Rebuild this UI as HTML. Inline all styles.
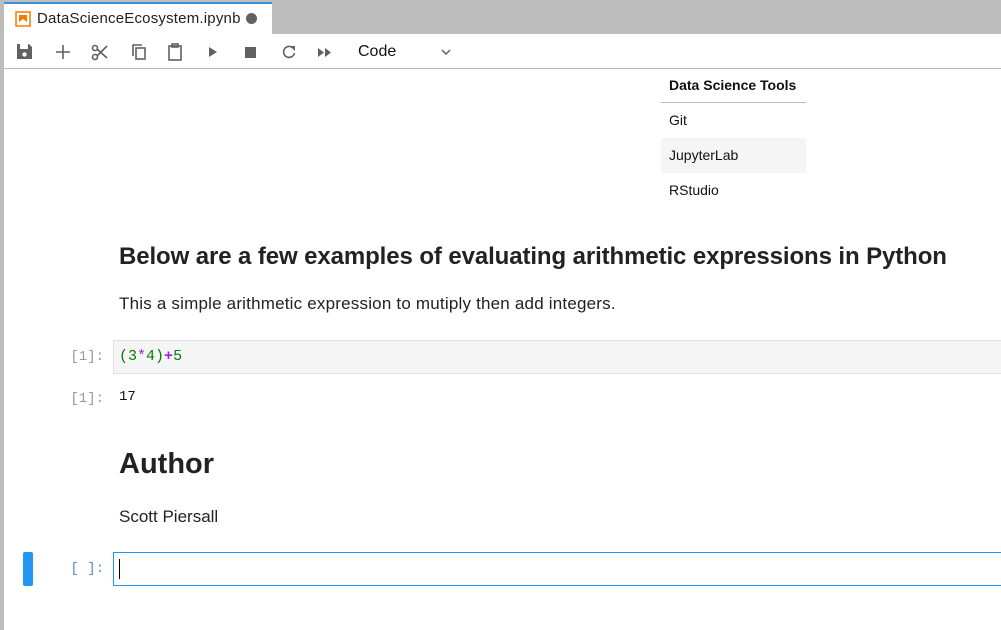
<!DOCTYPE html>
<html><head><style>
body{margin:0;width:1001px;height:630px;overflow:hidden;background:#fff;font-family:"Liberation Sans",sans-serif;position:relative}
.a{position:absolute}
.mono{font-family:"Liberation Mono",monospace;font-size:14px}
.pr{color:#999;width:100px;text-align:right;left:4px}
</style></head><body>
<div class="a" style="left:0;top:0;width:1001px;height:34px;background:#bdbdbd"></div>
<div class="a" style="left:0;top:0;width:4px;height:630px;background:#bdbdbd"></div>
<div class="a" style="left:4px;top:2px;width:268px;height:32px;background:#fff;border-top:2px solid #3c8fdf;box-sizing:border-box"></div>
<svg class="a" style="left:15px;top:11px" width="16" height="16"><rect x="1" y="1" width="14" height="14" fill="none" stroke="#f57c00" stroke-width="1.5"/><path d="M4 4h8v7l-4-3-4 3z" fill="#f57c00"/></svg>
<div class="a" style="left:37px;top:10px;font-size:15px;letter-spacing:0.2px;color:#222">DataScienceEcosystem.ipynb</div>
<div class="a" style="left:246px;top:13px;width:11px;height:11px;border-radius:50%;background:#616161"></div>
<div class="a" style="left:4px;top:68px;width:997px;height:1px;background:#bdbdbd"></div>
<svg class="a" style="left:14px;top:40px" width="450" height="24" fill="#616161" stroke="#616161">
<path d="M3 4h12l3 3v12H3z M6 4v5h8V4" stroke="none"/><rect x="6" y="5" width="7" height="4" fill="#fff" stroke="none"/><circle cx="10.5" cy="14.5" r="2.2" fill="#fff" stroke="none"/>
<path d="M49 5v14M42 12h14" stroke-width="1.6" fill="none"/>
<g fill="none" stroke-width="1.6"><circle cx="81" cy="8" r="2.5"/><circle cx="81" cy="17" r="2.5"/><path d="M83 9l10 9M83 16l10-10"/></g>
<g fill="none" stroke-width="1.6"><rect x="122" y="8" width="9" height="11"/><path d="M119 16V5h9"/></g>
<g fill="none" stroke-width="1.6"><rect x="155" y="6" width="12" height="14"/><rect x="158" y="4" width="6" height="3"/></g>
<path d="M195 7v10l8-5z" stroke="none"/>
<rect x="231" y="7" width="11" height="11" stroke="none"/>
<path d="M279 8a5.5 5.5 0 1 0 1.5 5" fill="none" stroke-width="1.6"/><path d="M276 6h5v5z" stroke="none"/>
<path d="M304 8v9l6-4.5zM311 8v9l6-4.5z" stroke="none"/>
<path d="M428 10l4 4 4-4" fill="none" stroke-width="1.5"/>
</svg>
<div class="a" style="left:358px;top:43px;font-size:16px;color:#111">Code</div>
<div class="a" style="left:661px;top:70px;width:145px;font-size:14px;color:#111">
<div style="height:32px;line-height:30px;font-weight:bold;padding-left:8px;border-bottom:1px solid #bdbdbd">Data Science Tools</div>
<div style="height:35px;line-height:35px;padding-left:8px">Git</div>
<div style="height:35px;line-height:35px;padding-left:8px;background:#f5f5f5">JupyterLab</div>
<div style="height:35px;line-height:35px;padding-left:8px">RStudio</div>
</div>
<div class="a" style="left:119px;top:243px;font-size:24px;font-weight:bold;color:#222;letter-spacing:-0.1px">Below are a few examples of evaluating arithmetic expressions in Python</div>
<div class="a" style="left:119px;top:294px;font-size:17px;color:#222;letter-spacing:0.2px">This a simple arithmetic expression to mutiply then add integers.</div>
<div class="a mono pr" style="top:349px">[1]:</div>
<div class="a" style="left:113px;top:340px;width:900px;height:34px;background:#f5f5f5;border:1px solid #e0e0e0;box-sizing:border-box"></div>
<div class="a mono" style="left:119px;top:348px;color:#008000;font-size:15px">(3<span style="color:#a020f0">*</span>4)<span style="color:#a020f0;font-weight:bold">+</span>5</div>
<div class="a mono pr" style="top:391px">[1]:</div>
<div class="a mono" style="left:119px;top:389px;color:#111">17</div>
<div class="a" style="left:119px;top:448px;font-size:29px;font-weight:bold;color:#222">Author</div>
<div class="a" style="left:119px;top:507px;font-size:17px;color:#222">Scott Piersall</div>
<div class="a" style="left:23px;top:552px;width:10px;height:34px;background:#2196f3;border-radius:2px"></div>
<div class="a mono pr" style="top:561px;color:#5b8fc9">[ ]:</div>
<div class="a" style="left:113px;top:552px;width:900px;height:34px;border:1px solid #2196f3;box-sizing:border-box"></div>
<div class="a" style="left:119px;top:559px;width:1px;height:20px;background:#000"></div>
</body></html>
